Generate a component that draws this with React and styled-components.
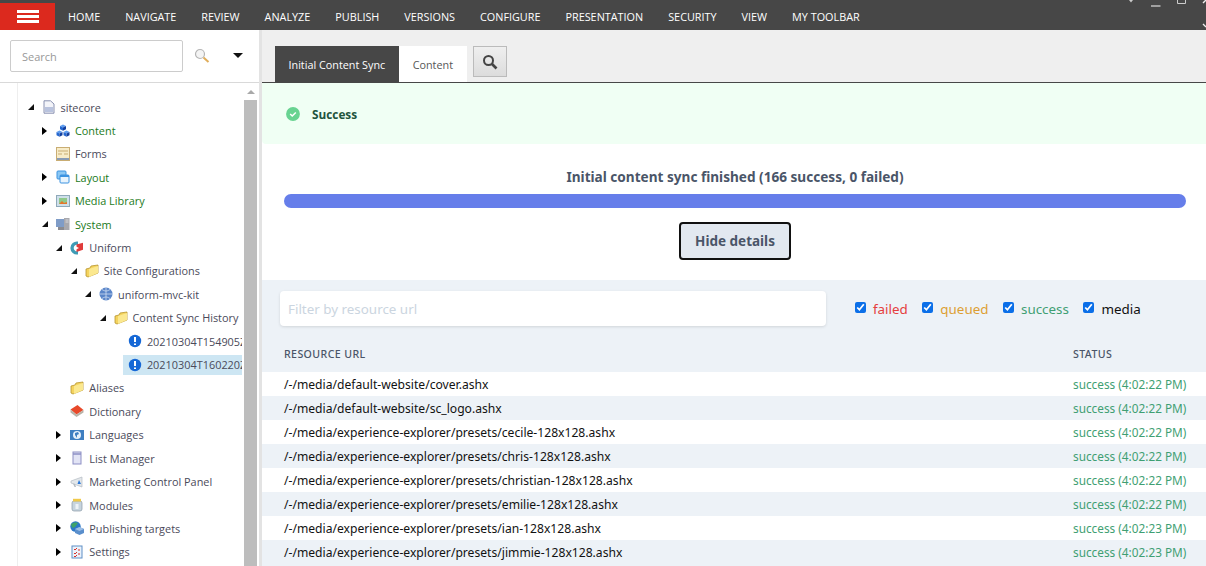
import styled, { createGlobalStyle } from "styled-components";

const GlobalStyle = createGlobalStyle`
  html, body {
    margin: 0;
    padding: 0;
    height: 100%;
    overflow: hidden;
    background: #fff;
  }
  * { box-sizing: border-box; }
`;

const Page = styled.div`
  width: 100vw;
  height: 100vh;
  overflow: hidden;
  display: flex;
  flex-direction: column;
  font-family: "Open Sans", "Noto Sans", sans-serif;
`;

const TopBar = styled.header`
  flex: 0 0 30px;
  display: flex;
  background: #474747;
  padding-top: 3px;
`;

const MenuButton = styled.div`
  width: 55px;
  background: #dc291e;
  display: flex;
  flex-direction: column;
  justify-content: center;
  align-items: center;
  gap: 2px;

  span {
    display: block;
    width: 22px;
    height: 3px;
    background: #fff;
  }
`;

const Nav = styled.nav`
  display: flex;
  gap: 25px;
  padding-left: 13px;
  align-items: center;
  margin-top: -1px;
  color: #fff;
  font-size: 10.83px;
`;

const WindowControls = styled.svg`
  position: absolute;
  top: 0;
  right: 0;
`;

const Body = styled.div`
  flex: 1;
  display: flex;
  min-height: 0;
`;

const Sidebar = styled.aside`
  width: 259px;
  display: flex;
  flex-direction: column;
  background: #fff;
`;

const SearchRow = styled.div`
  flex: 0 0 53px;
  display: flex;
  align-items: center;
  padding-left: 10px;
  border-bottom: 1px solid #d9d9d9;
`;

const SearchInput = styled.div`
  width: 173px;
  height: 32px;
  padding-left: 11px;
  display: flex;
  align-items: center;
  border: 1px solid #ccc;
  border-radius: 2px;
  color: #999;
  font-size: 11px;
`;

const SearchIcon = styled.svg`
  margin-left: 11px;
`;

const Caret = styled.div`
  margin-left: 23px;
  margin-bottom: 1px;
  border-left: 5px solid transparent;
  border-right: 5px solid transparent;
  border-top: 5px solid #111;
`;

const TreeArea = styled.div`
  flex: 1;
  display: flex;
  min-height: 0;
`;

const TreeGutter = styled.div`
  width: 18px;
  border-right: 1px solid #eee;
`;

const Tree = styled.ul`
  list-style: none;
  margin: 0 2px 0 0;
  padding: 12.4px 0 0;
  width: 224px;
  overflow: hidden;
`;

const TreeRow = styled.li`
  height: 23.42px;
  display: flex;
  align-items: center;
  padding-left: ${(p) => 5 + p.$level * 14.4}px;
  white-space: nowrap;
  font-size: 10.9px;
  color: ${(p) => (p.$green ? "#1b7a1b" : "#4a4a5a")};
`;

const ArrowSlot = styled.span`
  flex: 0 0 18.5px;
  display: flex;
  padding-left: 4.5px;
`;

const ArrowRight = styled.span`
  border-top: 4px solid transparent;
  border-bottom: 4px solid transparent;
  border-left: 5px solid #000;
`;

const ArrowDown = styled.span`
  width: 0;
  height: 0;
  border-left: 6px solid transparent;
  border-bottom: 6px solid #111;
`;

const RowBody = styled.div`
  flex: 1;
  min-width: 0;
  height: 20px;
  margin-left: -5px;
  padding-left: 5px;
  display: flex;
  align-items: center;
  overflow: hidden;
  background: ${(p) => (p.$active ? "#cde6f3" : "transparent")};
`;

const RowLabel = styled.span`
  margin-left: 2px;
`;

const Scrollbar = styled.div`
  width: 13px;
  display: flex;
  flex-direction: column;
  align-items: center;
`;

const ScrollUp = styled.div`
  flex: 0 0 17px;
  display: flex;
  align-items: center;
  justify-content: center;

  &::before {
    content: "";
    border-left: 4px solid transparent;
    border-right: 4px solid transparent;
    border-bottom: 4px solid #a9a9a9;
  }
`;

const ScrollThumb = styled.div`
  flex: 1;
  width: 100%;
  background: #bdbdbd;
`;

const Divider = styled.div`
  width: 3px;
  background: #e3e3e3;
`;

const Main = styled.main`
  flex: 1;
  min-width: 0;
  display: flex;
  flex-direction: column;
`;

const TabStrip = styled.div`
  flex: 0 0 53px;
  display: flex;
  align-items: flex-start;
  padding: 16px 0 0 13px;
  background: #efefef;
  border-bottom: 1px solid #474747;
`;

const Tab = styled.div`
  height: 36px;
  display: flex;
  align-items: center;
  padding: 0 ${(p) => (p.$active ? 13.5 : 14)}px;
  font-size: 10.8px;
  background: ${(p) => (p.$active ? "#474747" : "#fff")};
  color: ${(p) => (p.$active ? "#fff" : "#555")};
`;

const TabSearch = styled.div`
  width: 34px;
  height: 31px;
  margin-left: 6px;
  display: flex;
  align-items: center;
  justify-content: center;
  border: 1px solid #bbb;
  background: linear-gradient(#efefef, #dcdcdc);
`;

const Banner = styled.div`
  flex: 0 0 61px;
  display: flex;
  align-items: center;
  gap: 12px;
  padding: 1px 0 0 24px;
  background: #f0fff4;
  border-bottom-left-radius: 4px;
  font-size: 11.8px;
  font-weight: 700;
  color: #22543d;
`;

const Progress = styled.section`
  flex: 0 0 136px;
  padding: 23px 20px 0 22px;
  display: flex;
  flex-direction: column;
  align-items: center;
  font-family: "Noto Sans", "Open Sans", sans-serif;
`;

const ProgressTitle = styled.div`
  height: 20px;
  font-size: 13.6px;
  font-weight: 700;
  line-height: 20px;
  color: #4a5568;
`;

const ProgressBar = styled.div`
  width: 100%;
  height: 14px;
  margin-top: 7px;
  border-radius: 7px;
  background: #667eea;
`;

const DetailsButton = styled.button`
  width: 112px;
  height: 38px;
  margin-top: 14px;
  border: 2px solid #111;
  border-radius: 4px;
  background: #e2e8f0;
  font-family: inherit;
  font-size: 13.5px;
  font-weight: 700;
  color: #4a5568;
`;

const Details = styled.section`
  flex: 1;
  min-height: 0;
  overflow: hidden;
  background: #edf2f7;
  font-family: "Noto Sans", "Open Sans", sans-serif;
`;

const FilterRow = styled.div`
  display: flex;
  align-items: center;
  padding: 11px 0 0 18px;
`;

const FilterInput = styled.div`
  width: 546px;
  height: 35px;
  padding-left: 8px;
  display: flex;
  align-items: center;
  background: #fff;
  border-radius: 4px;
  box-shadow: 0 1px 3px rgba(0, 0, 0, 0.12);
  color: #cbd5e0;
  font-size: 13.4px;
`;

const Checks = styled.div`
  display: flex;
  align-items: center;
  gap: 14.5px;
  margin-left: 29px;
`;

const Check = styled.label`
  display: flex;
  align-items: center;
  gap: 7px;
  font-size: 13.4px;
  color: ${(p) => p.$color};

  input {
    width: 11px;
    height: 11px;
    margin: 0 0 2px;
    accent-color: #0b6fe8;
  }
`;

const TableRow = styled.div`
  height: 24px;
  display: grid;
  grid-template-columns: 789px 1fr;
  align-items: center;
  padding-left: 22px;
  font-size: 12.13px;
  color: #111;
  white-space: nowrap;
  background: ${(p) => (p.$odd ? "#fff" : "#edf2f7")};
`;

const TableHead = styled.div`
  height: 46px;
  display: grid;
  grid-template-columns: 789px 1fr;
  align-items: end;
  padding: 0 0 11px 22px;
  font-size: 10.6px;
  font-weight: 500;
  letter-spacing: 0.4px;
  color: #4a5568;
`;

const Status = styled.span`
  font-size: 11.8px;
  color: #3f9f73;
`;

const Ico = ({ children }) => (
  <svg width="14" height="14" viewBox="0 0 14 14" style={{ flex: "none", marginRight: 3 }}>
    {children}
  </svg>
);

const Folder = () => (
  <Ico>
    <path d="M1 5l4-1 1-2 7-1v8l-10 4-2-1z" fill="#f4d35e" stroke="#b8962e" strokeWidth=".8" />
    <path d="M4 5l9-3v7l-9 4z" fill="#fbe88f" />
  </Ico>
);

const InfoBadge = () => (
  <Ico>
    <circle cx="7" cy="7" r="6.2" fill="#1668d6" />
    <path d="M7 3v5M7 9.5v1.6" stroke="#fff" strokeWidth="2" />
  </Ico>
);

const Cube = ({ x, y }) => (
  <g transform={`translate(${x} ${y})`}>
    <path d="M0 1.5L3 0l3 1.5L3 3z" fill="#5c9cf0" />
    <path d="M0 1.5L3 3v3.2L0 4.7z" fill="#2467d0" />
    <path d="M6 1.5L3 3v3.2l3-1.5z" fill="#123f9e" />
  </g>
);

const icons = {
  page: (
    <Ico>
      <path d="M2 .8h6.5L12 4v9.2H2z" fill="#f3f4f9" stroke="#7d86a8" strokeWidth=".9" />
      <path d="M3 7h8v5H3z" fill="#b9c3de" />
    </Ico>
  ),
  content: (
    <Ico>
      <Cube x={4} y={0.5} />
      <Cube x={0.5} y={6.5} />
      <Cube x={7.5} y={6.5} />
    </Ico>
  ),
  forms: (
    <Ico>
      <rect x=".5" y=".5" width="13" height="13" fill="#f8ecc8" stroke="#c9ad73" />
      <path d="M2 4h10M2 7h4M8 7h4" stroke="#c9ad73" />
      <path d="M1 11h12v2H1z" fill="#8a9cb5" />
    </Ico>
  ),
  layout: (
    <Ico>
      <rect x="1" y="1" width="9" height="8" rx="1" fill="#8cc8f4" stroke="#3c93e0" />
      <rect x="4" y="5" width="9" height="8" rx="1" fill="#e8f4fd" stroke="#3c93e0" />
      <path d="M4 5h9v2H4z" fill="#3c93e0" />
    </Ico>
  ),
  media: (
    <Ico>
      <rect x=".5" y="1.5" width="13" height="11" fill="#cfe0ea" stroke="#8fa9ba" />
      <rect x="3" y="4" width="8" height="6" fill="#8fc98b" />
      <path d="M3 10l3-3 2 2 3-1v2z" fill="#e5762a" />
    </Ico>
  ),
  system: (
    <Ico>
      <rect x="0" y="2" width="9" height="8" fill="#7f9cc7" />
      <rect x="8" y="1" width="5.5" height="12" fill="#a8a8ad" />
      <path d="M9.5 3h3M9.5 5h3" stroke="#e6e6ea" strokeWidth=".8" />
      <rect x="2" y="10" width="6" height="3" fill="#8b8b90" />
    </Ico>
  ),
  uniform: (
    <Ico>
      <path d="M8 .6A6.5 6.5 0 1 0 8 13.4V10A3.2 3.2 0 1 1 8 4z" fill="#3f9bb5" />
      <path d="M6.5 3.5L13 1.8v7L6.5 11z" fill="#e03b3b" />
      <path d="M6 5.5l3 1.5-3 1.5z" fill="#fff" />
    </Ico>
  ),
  globe: (
    <Ico>
      <circle cx="7" cy="7" r="6.5" fill="#5b86c9" />
      <path d="M.5 7h13M7 .5v13M3 2.5c3 2 5 2 8 0M3 11.5c3-2 5-2 8 0" stroke="#dbe7f7" strokeWidth=".7" fill="none" />
    </Ico>
  ),
  dictionary: (
    <Ico>
      <path d="M.5 5.5L7.5 1 13.5 6 6.5 10.5z" fill="#e8492a" />
      <path d="M.5 5.5v3l6 4.5 7-4.5V6l-7 4.5z" fill="#b9b3a8" />
    </Ico>
  ),
  languages: (
    <Ico>
      <rect y="2" width="14" height="10" fill="#3f7fc1" />
      <circle cx="7" cy="7" r="4" fill="#e6f0fa" />
      <path d="M5 5l3-1 1 2-2 1v3L5 7z" fill="#3f7fc1" />
    </Ico>
  ),
  list: (
    <Ico>
      <rect x="3" y="1" width="8" height="12" fill="#e2e4f5" stroke="#8d8fc4" />
      <path d="M3 3h8" stroke="#8d8fc4" strokeWidth="1.5" />
    </Ico>
  ),
  marketing: (
    <Ico>
      <path d="M1 6l11-4v10L1 8z" fill="#e3e7ea" stroke="#b4bcc4" strokeWidth=".7" />
      <path d="M9 5l2 4H7.5z" fill="#2a78d8" />
      <path d="M3 8.5l1.5 3.5H6L5 9z" fill="#b4bcc4" />
    </Ico>
  ),
  modules: (
    <Ico>
      <rect x="2" y="3" width="10" height="10" rx="2" fill="#c7d4de" stroke="#8a9aa6" strokeWidth=".7" />
      <rect x="3" y=".8" width="8" height="2.7" fill="#f0c94a" />
      <rect x="5.5" y="6" width="3" height="5" fill="#eef3f7" />
    </Ico>
  ),
  publishing: (
    <Ico>
      <circle cx="5.5" cy="5.5" r="5.2" fill="#2d78c8" />
      <path d="M1 3.5C3 1.5 6 1 8 2L5 6 2.5 7z" fill="#3fa36a" />
      <path d="M5 8l4.5-2 4.5 2v4l-4.5 2L5 12z" fill="#5a8fcc" />
      <path d="M5 8l4.5 2L14 8l-4.5-2z" fill="#9dbfe6" />
    </Ico>
  ),
  settings: (
    <Ico>
      <rect x="2" y="1" width="10" height="12" fill="#eaf2fb" stroke="#5e8fc6" />
      <path d="M4 4l1 1 2-2M4 8l1 1 2-2M4 11l1 1 2-2M8 5h2M8 9h2" stroke="#d8322a" fill="none" />
    </Ico>
  ),
};

const treeItems = [
  { label: "sitecore", level: 0, open: true, icon: icons.page },
  { label: "Content", level: 1, arrow: true, icon: icons.content, green: true },
  { label: "Forms", level: 1, icon: icons.forms },
  { label: "Layout", level: 1, arrow: true, icon: icons.layout, green: true },
  { label: "Media Library", level: 1, arrow: true, icon: icons.media, green: true },
  { label: "System", level: 1, open: true, icon: icons.system, green: true },
  { label: "Uniform", level: 2, open: true, icon: icons.uniform },
  { label: "Site Configurations", level: 3, open: true, icon: <Folder /> },
  { label: "uniform-mvc-kit", level: 4, open: true, icon: icons.globe },
  { label: "Content Sync History", level: 5, open: true, icon: <Folder /> },
  { label: "20210304T154905Z", level: 6, icon: <InfoBadge /> },
  { label: "20210304T160220Z", level: 6, icon: <InfoBadge />, active: true },
  { label: "Aliases", level: 2, icon: <Folder /> },
  { label: "Dictionary", level: 2, icon: icons.dictionary },
  { label: "Languages", level: 2, arrow: true, icon: icons.languages },
  { label: "List Manager", level: 2, arrow: true, icon: icons.list },
  { label: "Marketing Control Panel", level: 2, arrow: true, icon: icons.marketing },
  { label: "Modules", level: 2, arrow: true, icon: icons.modules },
  { label: "Publishing targets", level: 2, arrow: true, icon: icons.publishing },
  { label: "Settings", level: 2, arrow: true, icon: icons.settings },
];

const navItems = [
  "HOME",
  "NAVIGATE",
  "REVIEW",
  "ANALYZE",
  "PUBLISH",
  "VERSIONS",
  "CONFIGURE",
  "PRESENTATION",
  "SECURITY",
  "VIEW",
  "MY TOOLBAR",
];

const resources = [
  ["default-website/cover.ashx", "4:02:22 PM"],
  ["default-website/sc_logo.ashx", "4:02:22 PM"],
  ["experience-explorer/presets/cecile-128x128.ashx", "4:02:22 PM"],
  ["experience-explorer/presets/chris-128x128.ashx", "4:02:22 PM"],
  ["experience-explorer/presets/christian-128x128.ashx", "4:02:22 PM"],
  ["experience-explorer/presets/emilie-128x128.ashx", "4:02:22 PM"],
  ["experience-explorer/presets/ian-128x128.ashx", "4:02:23 PM"],
  ["experience-explorer/presets/jimmie-128x128.ashx", "4:02:23 PM"],
];

const checks = [
  ["failed", "#e53e3e"],
  ["queued", "#dd9f33"],
  ["success", "#3f9f73"],
  ["media", "#111"],
];

const App = () => {
  return (
    <>
      <GlobalStyle />
      <Page>
        <TopBar>
          <MenuButton>
            <span />
            <span />
            <span />
          </MenuButton>
          <Nav>
            {navItems.map((item) => (
              <span key={item}>{item}</span>
            ))}
          </Nav>
          <WindowControls width="90" height="30" viewBox="0 0 90 30">
            <path d="M13 0h4l-2 2.5z" fill="#ccc" />
            <path d="M35 6h9.5" stroke="#ddd" strokeWidth="1.2" />
            <path d="M61.5 0v3.5h8V0" stroke="#ccc" fill="none" />
            <path d="M90 0l-3 3M90 27l-3-3" stroke="#eee" strokeWidth="1.4" />
          </WindowControls>
        </TopBar>
        <Body>
          <Sidebar>
            <SearchRow>
              <SearchInput>Search</SearchInput>
              <SearchIcon width="16" height="16" viewBox="0 0 16 16">
                <circle cx="6" cy="6" r="4.5" fill="#f4f4f4" stroke="#b5b5b5" strokeWidth="1.2" />
                <path d="M9.5 9.5l5 4.5" stroke="#e0ad5a" strokeWidth="2" />
              </SearchIcon>
              <Caret />
            </SearchRow>
            <TreeArea>
              <TreeGutter />
              <Tree>
                {treeItems.map((item) => (
                  <TreeRow key={item.label} $level={item.level} $green={item.green}>
                    <ArrowSlot>
                      {item.open && <ArrowDown />}
                      {item.arrow && <ArrowRight />}
                    </ArrowSlot>
                    <RowBody $active={item.active}>
                      {item.icon}
                      <RowLabel>{item.label}</RowLabel>
                    </RowBody>
                  </TreeRow>
                ))}
              </Tree>
              <Scrollbar>
                <ScrollUp />
                <ScrollThumb />
              </Scrollbar>
            </TreeArea>
          </Sidebar>
          <Divider />
          <Main>
            <TabStrip>
              <Tab $active>Initial Content Sync</Tab>
              <Tab>Content</Tab>
              <TabSearch>
                <svg width="16" height="16" viewBox="0 0 16 16">
                  <circle cx="6.5" cy="6.5" r="4.5" fill="none" stroke="#444" strokeWidth="2" />
                  <path d="M10 10l4.5 4.5" stroke="#444" strokeWidth="2.6" />
                </svg>
              </TabSearch>
            </TabStrip>
            <Banner>
              <svg width="14" height="14" viewBox="0 0 15 15">
                <circle cx="7.5" cy="7.5" r="7.4" fill="#68d391" />
                <path d="M4.5 7.5l2.2 2.2 3.8-3.8" stroke="#fff" strokeWidth="1.6" fill="none" />
              </svg>
              Success
            </Banner>
            <Progress>
              <ProgressTitle>Initial content sync finished (166 success, 0 failed)</ProgressTitle>
              <ProgressBar />
              <DetailsButton>Hide details</DetailsButton>
            </Progress>
            <Details>
              <FilterRow>
                <FilterInput>Filter by resource url</FilterInput>
                <Checks>
                  {checks.map(([name, color]) => (
                    <Check key={name} $color={color}>
                      <input type="checkbox" defaultChecked />
                      {name}
                    </Check>
                  ))}
                </Checks>
              </FilterRow>
              <TableHead>
                <span>RESOURCE URL</span>
                <span>STATUS</span>
              </TableHead>
              {resources.map(([path, time], i) => (
                <TableRow key={path} $odd={i % 2 === 0}>
                  <span>/-/media/{path}</span>
                  <Status>success ({time})</Status>
                </TableRow>
              ))}
            </Details>
          </Main>
        </Body>
      </Page>
    </>
  );
};

export default App;
